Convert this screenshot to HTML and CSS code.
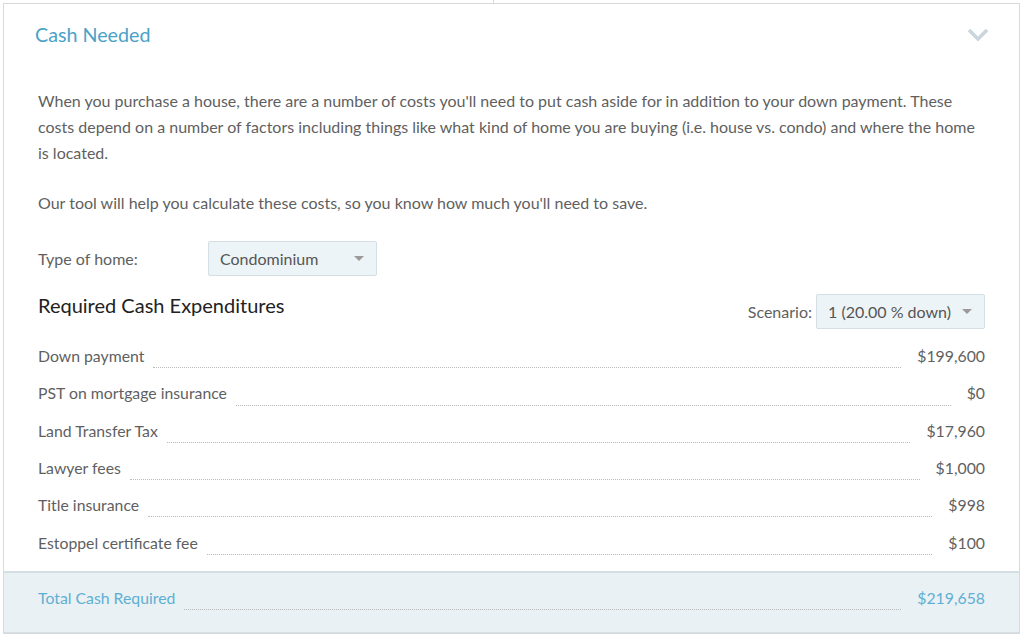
FILE: index.html
```html
<!DOCTYPE html>
<html>
<head>
<meta charset="utf-8">
<link rel="stylesheet" href="styles.css">
</head>
<body>
<div class="topstrip"><div class="topstrip-left"></div></div>
<section class="panel">
  <header class="panel-head">
    <h2 class="panel-title">Cash Needed</h2>
    <svg class="chevron" width="22" height="14" viewBox="0 0 22 14"><path d="M2 2 L11 11 L20 2" fill="none" stroke="#c9d6dc" stroke-width="3.6"/></svg>
  </header>
  <div class="panel-body">
    <p class="intro">When you purchase a house, there are a number of costs you'll need to put cash aside for in addition to your down payment. These costs depend on a number of factors including things like what kind of home you are buying (i.e. house vs. condo) and where the home is located.</p>
    <p class="intro second">Our tool will help you calculate these costs, so you know how much you'll need to save.</p>
    <div class="field">
      <span class="field-label">Type of home:</span>
      <div class="select"><span>Condominium</span><span class="caret"></span></div>
    </div>
    <div class="exp-head">
      <h3 class="exp-title">Required Cash Expenditures</h3>
      <div class="scenario">
        <span class="scenario-label">Scenario:</span>
        <div class="select"><span>1 (20.00 % down)</span><span class="caret"></span></div>
      </div>
    </div>
    <ul class="rows">
      <li class="row"><span class="name">Down payment</span><span class="dots"></span><span class="val">$199,600</span></li>
      <li class="row"><span class="name">PST on mortgage insurance</span><span class="dots"></span><span class="val">$0</span></li>
      <li class="row"><span class="name">Land Transfer Tax</span><span class="dots"></span><span class="val">$17,960</span></li>
      <li class="row"><span class="name">Lawyer fees</span><span class="dots"></span><span class="val">$1,000</span></li>
      <li class="row"><span class="name">Title insurance</span><span class="dots"></span><span class="val">$998</span></li>
      <li class="row"><span class="name">Estoppel certificate fee</span><span class="dots"></span><span class="val">$100</span></li>
    </ul>
  </div>
  <div class="total">
    <div class="row total-row"><span class="name">Total Cash Required</span><span class="dots"></span><span class="val">$219,658</span></div>
  </div>
</section>
</body>
</html>
```

FILE: styles.css
```css
* { box-sizing: border-box; }
html, body { margin: 0; padding: 0; background: #fff; }
body {
  font-family: "Lato", "Open Sans", sans-serif;
  color: #5f5f5f;
  width: 1023px;
  height: 636px;
  overflow: hidden;
}
.topstrip {
  height: 3px;
  margin-left: 3px;
  width: 1017px;
}
.topstrip-left {
  width: 491px;
  height: 3px;
  border-right: 1px solid #d6dadc;
}
.panel {
  margin-left: 3px;
  width: 1017px;
  border: 1px solid #d6dadc;
}
.panel-head {
  height: 62px;
  display: flex;
  align-items: center;
  justify-content: space-between;
  padding: 0 30px 2px 31px;
}
.panel-title {
  margin: 0;
  font-weight: 400;
  font-size: 19.7px;
  color: #4aa2c7;
}
.chevron { margin-top: 2px; }
.panel-body {
  padding: 22px 34px 10px 34px;
}
.intro {
  margin: 0;
  font-size: 16px;
  line-height: 26px;
  color: #5f5f5f;
}
.intro.second { margin-top: 24px; }
.field {
  display: flex;
  align-items: center;
  margin-top: 25px;
}
.field-label {
  width: 170px;
  font-size: 16px;
}
.select {
  width: 169px;
  height: 35px;
  background: #edf4f7;
  border: 1px solid #d3dfe4;
  border-radius: 2px;
  display: flex;
  align-items: center;
  justify-content: space-between;
  padding: 0 12px 0 11px;
  font-size: 16px;
  color: #555;
}
.caret {
  width: 0;
  height: 0;
  border-left: 5px solid transparent;
  border-right: 5px solid transparent;
  border-top: 5px solid #9a9a9a;
}
.exp-head {
  display: flex;
  justify-content: space-between;
  align-items: flex-start;
  margin-top: 18px;
  height: 43px;
}
.exp-title {
  margin: 0;
  font-weight: 400;
  font-size: 20px;
  color: #222;
  line-height: 22px;
}
.scenario {
  display: flex;
  align-items: center;
}
.scenario-label {
  font-size: 16px;
  margin-right: 4px;
}
.rows {
  list-style: none;
  margin: 0;
  padding: 0;
}
.row {
  display: flex;
  align-items: center;
  height: 37.3px;
  font-size: 15.8px;
}
.name { white-space: nowrap; }
.dots {
  flex: 1;
  align-self: flex-end;
  margin: 0 16px 6px 9px;
  border-bottom: 1px dotted #b9b9b9;
  height: 1px;
}
.val { white-space: nowrap; }
.total {
  background: #e9f1f4;
  border-top: 2px solid #d6dfe3;
  border-bottom: 1px solid #d6dfe3;
  height: 62px;
  padding: 6px 34px 0 34px;
}
.total-row { color: #5fafd2; }
```
